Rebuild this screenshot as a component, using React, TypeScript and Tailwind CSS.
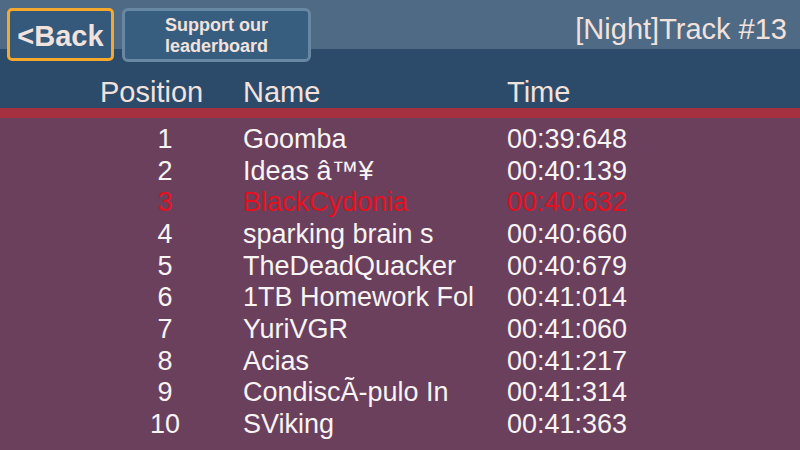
import React from "react";

const rows: { pos: string; name: string; time: string; me?: boolean }[] = [
  { pos: "1", name: "Goomba", time: "00:39:648" },
  { pos: "2", name: "Ideas â™¥", time: "00:40:139" },
  { pos: "3", name: "BlackCydonia", time: "00:40:632", me: true },
  { pos: "4", name: "sparking brain s", time: "00:40:660" },
  { pos: "5", name: "TheDeadQuacker", time: "00:40:679" },
  { pos: "6", name: "1TB Homework Fol", time: "00:41:014" },
  { pos: "7", name: "YuriVGR", time: "00:41:060" },
  { pos: "8", name: "Acias", time: "00:41:217" },
  { pos: "9", name: "CondiscÃ-pulo In", time: "00:41:314" },
  { pos: "10", name: "SViking", time: "00:41:363" },
];

export default function App() {
  return (
    <div
      className="w-[800px] h-[450px] overflow-hidden flex flex-col bg-[#6b405c]"
      style={{ fontFamily: '"Liberation Sans", Arial, sans-serif' }}
    >
      <div className="h-[108px] flex flex-col bg-[linear-gradient(to_bottom,#4f6a84_49px,#2c4a69_49px)]">
        <div className="flex items-start pl-[7px] pt-[8px] pr-[13px]">
          <div className="w-[107px] h-[53px] border-[3px] border-[#f5a82c] rounded-[5px] bg-[#34597a] flex items-center justify-center">
            <span className="text-[29px] font-bold text-[#f2e2dd] leading-none pt-[3px]">&lt;Back</span>
          </div>
          <div className="ml-[8px] w-[189px] h-[54px] border-[3px] border-[#6887a3] rounded-[6px] bg-[#385e7f] flex items-center justify-center">
            <span className="text-[18px] font-bold text-[#f2e2dd] leading-[21px] text-center pt-[1px]">
              Support our
              <br />
              leaderboard
            </span>
          </div>
          <div className="ml-auto text-[29px] leading-[32px] text-[#f2e2dd] pt-[5px]">[Night]Track #13</div>
        </div>
        <div className="flex pl-[100px] mt-[14px] text-[29px] leading-[32px] text-[#f2e2dd]">
          <div className="w-[143px]">Position</div>
          <div className="w-[264px]">Name</div>
          <div>Time</div>
        </div>
      </div>
      <div className="h-[10px] bg-[#a5303f]" />
      <div className="pt-[6px] pl-[100px] text-[27px] leading-[31.67px]">
        {rows.map((r) => (
          <div key={r.pos} className={`flex ${r.me ? "text-[#e5101e]" : "text-[#f8f4f4]"}`}>
            <div className="w-[130px] text-center">{r.pos}</div>
            <div className="ml-[13px] w-[264px] whitespace-nowrap">{r.name}</div>
            <div>{r.time}</div>
          </div>
        ))}
      </div>
    </div>
  );
}
